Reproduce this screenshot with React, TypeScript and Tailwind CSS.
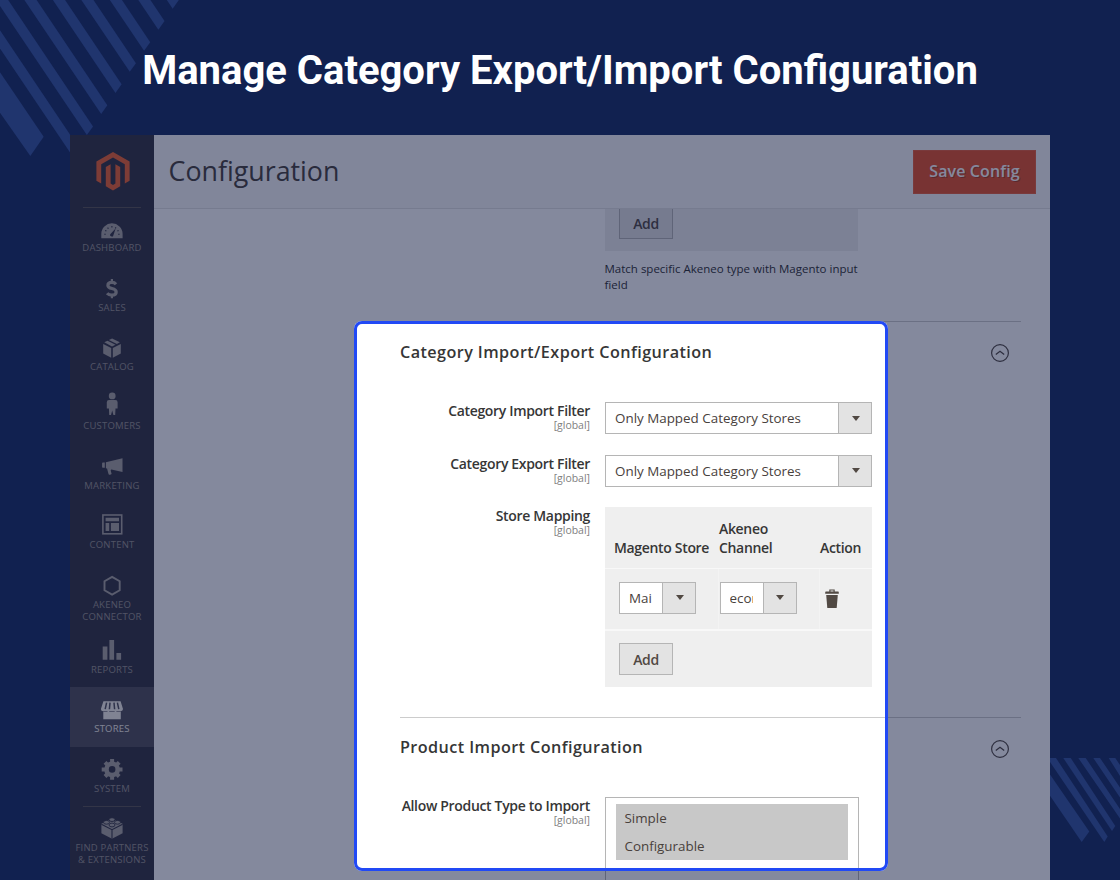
import type { ReactNode } from "react";

type MenuItem = {
  label: string[];
  height: string;
  icon: ReactNode;
  active?: boolean;
};

const menuItems: MenuItem[] = [
  {
    label: ["DASHBOARD"],
    height: "h-[59.4px]",
    icon: (
      <>
        <path d="M1.3 22.2v-4.4a10.65 10.5 0 0 1 21.3 0v4.4z" fill="currentColor" />
        <path d="M4.3 18.3h1.4M5.2 14.4l1.2.6M7.6 11.6l.8 1.1M11.9 10v1.4M18.6 14.4l-1.2.6M19.6 18.3h-1.4M16 11.4l-.7 1" stroke="#343340" strokeWidth="1.1" />
        <path d="M15.6 12.6l-2.2 6.6a1.6 1.6 0 1 1-2.7-1.4z" fill="#343340" />
      </>
    ),
  },
  {
    label: ["SALES"],
    height: "h-[59.4px]",
    icon: (
      <>
        <path d="M16 8.2c-1-1.2-2.4-1.8-4.1-1.8-2.5 0-4 1.2-4 3 0 4.3 8.3 2 8.3 6.5 0 2-1.7 3.2-4.3 3.2-2 0-3.7-.6-4.8-1.9" fill="none" stroke="currentColor" strokeWidth="3.2" />
        <path d="M11.9 3v3M11.9 19.500v2.800" stroke="currentColor" strokeWidth="2.2" />
      </>
    ),
  },
  {
    label: ["CATALOG"],
    height: "h-[59.4px]",
    icon: (
      <g fill="currentColor">
        <path d="M3.2 8.9l8 4.1v9.8l-8-4.3z" />
        <path d="M20.8 8.9l-8 4.1v9.8l8-4.3z" />
        <path d="M4.3 7.3l3.2-1.6 8 4.1-3.5 1.8z" />
        <path d="M8.9 5l3.2-1.6 7.7 3.9-2.9 1.6z" />
      </g>
    ),
  },
  {
    label: ["CUSTOMERS"],
    height: "h-[59.4px]",
    icon: (
      <g fill="currentColor">
        <circle cx="12.2" cy="1.9" r="3.4" />
        <path d="M9 6h6.4a2.2 2.2 0 0 1 2.2 2.2v6.4h-2.1l-.3 6.5h-1.8l-1.2-4.5-1.2 4.5H9.2l-.3-6.5H6.8V8.2A2.2 2.2 0 0 1 9 6z" />
      </g>
    ),
  },
  {
    label: ["MARKETING"],
    height: "h-[59.4px]",
    icon: (
      <g fill="currentColor">
        <path d="M5.9 8.3l16.6-4v13.6L5.9 14.3z" />
        <path d="M2.9 8.6h1.9v5.2H2.9a.8.8 0 0 1-.8-.8V9.4a.8.8 0 0 1 .8-.8z" />
        <path d="M6.9 14l4.4 1-.6 1.5.9 3.6c-1 .8-2.3.8-3 .1z" />
      </g>
    ),
  },
  {
    label: ["CONTENT"],
    height: "h-[59.4px]",
    icon: (
      <>
        <rect x="2.9" y="2" width="18.8" height="18.8" fill="none" stroke="currentColor" strokeWidth="1.6" />
        <path d="M5.6 4.7h13.4v3.5H5.6zM5.6 9.9h3.6v8H5.6zM10.9 9.9H19v8h-8.1z" fill="currentColor" />
      </>
    ),
  },
  {
    label: ["AKENEO", "CONNECTOR"],
    height: "h-[65.4px]",
    icon: (
      <path d="M12.1 3.9l7.6 4.4v8.9l-7.6 4.4-7.6-4.400V8.300z" fill="none" stroke="currentColor" strokeWidth="1.9" />
    ),
  },
  {
    label: ["REPORTS"],
    height: "h-[59.4px]",
    icon: (
      <path d="M2.7 8.4h4.7v13.3H2.7zM9.4 2h4.7v19.7H9.4zM16.4 15h4.7v6.7h-4.7z" fill="currentColor" />
    ),
  },
  {
    label: ["STORES"],
    height: "h-[59.2px]",
    active: true,
    icon: (
      <>
        <path d="M3.4 4.3h17.2l2.4 7.8a2.3 2.3 0 0 1-2.2 2.2v7.9H3.3v-7.9A2.3 2.3 0 0 1 .9 12.1z" fill="currentColor" />
        <path d="M6.6 5.6l-1.4 6.6M10 5.6l-.6 6.6M14 5.6l.6 6.6M17.4 5.6l1.4 6.6" stroke="#514f59" strokeWidth="1.5" />
        <path d="M3.2 14.5h4.3M9.2 14.5h5.5M16.4 14.5h4.4" stroke="#514f59" strokeWidth=".6" />
      </>
    ),
  },
  {
    label: ["SYSTEM"],
    height: "h-[59.4px]",
    icon: (
      <g transform="translate(12.1 12.4)">
        <g stroke="currentColor" strokeWidth="4">
          <path d="M0-10.4V10.4M-10.4 0H10.4" />
          <path d="M-7.1-7.1L7.1 7.1M7.1-7.1L-7.1 7.1" />
        </g>
        <circle r="7.9" fill="currentColor" />
        <circle r="3.3" fill="#343340" />
      </g>
    ),
  },
];

const fieldText = "text-[13.4px] text-[#48413c]";
const labelText = "text-[14px] font-semibold tracking-[-0.33px]";

const MagentoLogo = () => (
  <svg viewBox="0 0 34 39" className="h-[39px] w-[34px] fill-[#f0642f]">
    <path d="M17 0L33.6 9.6v19.2l-4.8 2.7V12.3L17 5.4 5.2 12.3v19.2L.4 28.8V9.6z" />
    <path d="M14.6 12.2v19.3L17 33l2.4-1.5V12.2L24.2 15v19.2L17 38.5l-7.2-4.3V15z" />
  </svg>
);

const NavItem = ({ label, height, icon, active }: MenuItem) => (
  <li className={`${height} shrink-0 pt-[10px] ${active ? "bg-[#514f59] text-[#f7f3eb]" : "text-[#aaa6a0]"}`}>
    <svg viewBox="0 0 24 26" className="mx-auto h-[26px] w-6 overflow-visible">
      {icon}
    </svg>
    <div className={`text-center text-[9.52px] leading-[12.5px] tracking-[0.2px] ${active ? "text-[#f7f3eb]" : "text-[#98948f]"}`}>
      {label.map((line) => (
        <div key={line}>{line}</div>
      ))}
    </div>
  </li>
);

const Sidebar = () => (
  <aside className="flex w-[84px] shrink-0 flex-col bg-[#343340]">
    <div className="mx-auto mt-[16.5px] pl-[1.5px]">
      <MagentoLogo />
    </div>
    <div className="mx-auto mt-4 h-px w-[58px] shrink-0 bg-[#5c5652]" />
    <ul className="-mt-[1.3px] flex flex-col">
      {menuItems.map((item) => (
        <NavItem key={item.label[0]} {...item} />
      ))}
    </ul>
    <div className="mx-auto h-px w-[58px] shrink-0 bg-[#5c5652]" />
    <ul className="-mt-[1px]">
      <NavItem
        label={["FIND PARTNERS", "& EXTENSIONS"]}
        height="h-[74px]"
        icon={
          <>
            <path d="M1.4 7.7L12 2.5l10.6 5.2v9.5L12 22.8 1.4 17.2z" fill="currentColor" />
            <path d="M1.4 8.3L12 13.7l10.6-5.4M12 13.7v9" fill="none" stroke="#343340" strokeWidth="1.1" />
            <g fill="currentColor" stroke="#343340" strokeWidth=".9">
              <ellipse cx="12" cy="3.6" rx="3" ry="1.9" />
              <ellipse cx="6.5" cy="6.3" rx="3" ry="1.9" />
              <ellipse cx="17.5" cy="6.3" rx="3" ry="1.9" />
              <ellipse cx="12" cy="9" rx="3" ry="1.9" />
            </g>
          </>
        }
      />
    </ul>
  </aside>
);

const Caret = () => (
  <svg viewBox="0 0 8 5" className="ml-px h-[5px] w-2 fill-[#514943]">
    <path d="M0 0h8L4 5z" />
  </svg>
);

const SelectBox = ({ value, className }: { value: string; className: string }) => (
  <div className={`flex h-8 border border-[#b5b5b5] bg-white ${className}`}>
    <div className="flex min-w-0 flex-1 items-center overflow-hidden pt-px pl-[9px]">
      <span className={`overflow-hidden whitespace-nowrap ${fieldText}`}>{value}</span>
    </div>
    <div className="flex w-[33px] shrink-0 items-center justify-center border-l border-[#b5b5b5] bg-[#e3e3e3]">
      <Caret />
    </div>
  </div>
);

const AddButton = () => (
  <button className={`flex h-8 w-[54px] items-center justify-center border border-[#b5b5b5] bg-[#e3e3e3] text-[#514943] ${labelText}`}>
    Add
  </button>
);

const FieldLabel = ({ children }: { children: string }) => (
  <div className="w-[190px] shrink-0 text-right">
    <div className={`leading-[18px] whitespace-nowrap text-[#363636] ${labelText}`}>{children}</div>
    <div className="-mt-[2px] text-[10.48px] leading-[14px] text-[#808080]">[global]</div>
  </div>
);

const SectionHeader = ({ title }: { title: string }) => (
  <div className="flex h-[63px] items-center justify-between border-t border-[#ccc] pr-[12.5px]">
    <h2 className="pb-[2px] text-[16.19px] font-semibold tracking-[0.42px] text-[#363636]">{title}</h2>
    <svg viewBox="0 0 18 18" className="h-[18px] w-[18px] fill-none stroke-[#514943]">
      <circle cx="9" cy="9" r="8.4" strokeWidth="1.2" />
      <path d="M4.8 10.6L9 7.3l4.2 3.3" strokeWidth="1.3" />
    </svg>
  </div>
);

const TrashIcon = () => (
  <svg viewBox="0 0 14 19" className="h-[19px] w-[14px] fill-[#514943]">
    <path d="M4.3 2.4V.5h5.4v1.9h3.2c.6 0 .9.5.9 1.1v1.3H.2V3.5c0-.6.3-1.1.9-1.1zM5.5 2.4h3v-.9h-3z" />
    <path d="M1.2 6.1h11.6L11.7 19H2.3z" />
  </svg>
);

const StoreMapping = () => (
  <div className="h-[180px] w-[267px] bg-[#efefef]">
    <div className={`grid h-[62px] grid-cols-[114px_101px_1fr] items-end border-b border-[#f8f8f8] pb-[11px] leading-[18.5px] text-[#363636] ${labelText}`}>
      <div className="pl-[9px] whitespace-nowrap">Magento Store</div>
      <div>
        Akeneo
        <br />
        Channel
      </div>
      <div>Action</div>
    </div>
    <div className="grid h-[62px] grid-cols-[114px_101px_1fr] border-b-2 border-[#f8f8f8]">
      <div className="flex items-center border-r border-[#f3f3f3] pb-[3px] pl-[14px]">
        <SelectBox value="Mai" className="w-[77px]" />
      </div>
      <div className="flex items-center border-r border-[#f3f3f3] pb-[3px] pl-[0.5px]">
        <SelectBox value="ecommerce" className="w-[77px] [&>div:first-child]:pr-[10px]" />
      </div>
      <div className="flex items-center pb-px pl-[5px]">
        <TrashIcon />
      </div>
    </div>
    <div className="pt-[12px] pl-[14px]">
      <AddButton />
    </div>
  </div>
);

const Content = () => (
  <div className="relative flex-1 overflow-hidden pr-[29px] pl-[246px]">
    <div className="ml-[205px] h-[42px] w-[253px] overflow-hidden bg-[#efefef] pl-[14px]">
      <div className="-mt-[2px]">
        <AddButton />
      </div>
    </div>
    <p className="mt-[10px] ml-[204.5px] w-[262px] text-[11.5px] leading-4 text-[#303030]">
      Match specific Akeneo type with Magento input
      <br />
      field
    </p>

    <div className="mt-[28px]">
      <SectionHeader title="Category Import/Export Configuration" />
      <div className="mt-[18px] flex gap-[15px]">
        <FieldLabel>Category Import Filter</FieldLabel>
        <SelectBox value="Only Mapped Category Stores" className="w-[267px]" />
      </div>
      <div className="mt-[20.5px] flex gap-[15px]">
        <FieldLabel>Category Export Filter</FieldLabel>
        <SelectBox value="Only Mapped Category Stores" className="w-[267px]" />
      </div>
      <div className="mt-[20.5px] flex gap-[15px]">
        <FieldLabel>Store Mapping</FieldLabel>
        <StoreMapping />
      </div>
    </div>

    <div className="mt-[29.5px]">
      <SectionHeader title="Product Import Configuration" />
      <div className="mt-[17px] flex gap-[15px]">
        <FieldLabel>Allow Product Type to Import</FieldLabel>
        <div className="h-[120px] w-[254px] border border-[#b5b5b5] px-[10px] pt-[6px]">
          <ul className={`bg-[#c8c8c8] ${fieldText}`}>
            <li className="h-7 pl-[8.5px] leading-7">Simple</li>
            <li className="h-7 pl-[8.5px] leading-7">Configurable</li>
          </ul>
        </div>
      </div>
    </div>
  </div>
);

// diagonal bars, each one a step to the lower left of the one before
const cornerBars = [0, 1, 2, 3, 4, 5, 6, 7];

const Stripes = () => (
  <>
    <svg viewBox="0 0 540 480" className="absolute top-0 left-0 h-[160px] w-[180px] fill-[#20356e]">
      {cornerBars.map((i) => {
        const x = 518 - 42.9 * i;
        const y = 26 + 63.2 * i;
        return <path key={i} d={`M${x} ${y}l18.5-26-400-596h-37.5z`} />;
      })}
      <path d="M91 468l40-58L0 217v121z" />
    </svg>
    <svg viewBox="0 0 70 85" className="absolute top-[757.5px] right-0 h-[85px] w-[70px] fill-[#20356e]">
      <path d="M31.7 84l7.6-10.5L0 16.5v21.3z" />
      <path d="M54.3 84l3.4-5.5L6 0H0v4z" />
      <path d="M62 73l3.3-5L20.7 0h-7.4z" />
      <path d="M35.7 0L70 51v9.5L28.3 0zM50 0l20 29.5v10L43.3 0zM65.3 0L70 7v11L58.7 0z" />
    </svg>
  </>
);

export default function App() {
  return (
    <div className="relative flex h-[880px] w-[1120px] flex-col overflow-hidden bg-[#112150] font-['Open_Sans',sans-serif]">
      <Stripes />
      <h1 className="relative h-[135px] pt-[47px] text-center font-['Roboto',sans-serif] text-[40px] leading-[47px] font-bold text-white">
        Manage Category Export/Import Configuration
      </h1>

      <div className="relative mx-auto flex h-[745px] w-[980px] overflow-hidden bg-white">
        <Sidebar />
        <main className="flex min-w-0 flex-1 flex-col">
          <header className="flex h-[74px] shrink-0 items-center justify-between border-b border-[#e3e3e3] bg-[#f8f8f8] pr-[14px] pl-[14.5px]">
            <span className="text-[26.8px] text-[#48413c]">Configuration</span>
            <button className="h-[44px] w-[123px] border border-[#e9603c] bg-[#e6512a] pb-[2px] text-[16px] font-semibold tracking-[0.12px] text-white [text-shadow:1px_1px_0_rgba(0,0,0,0.25)]">
              Save Config
            </button>
          </header>
          <Content />
        </main>

        {/* spotlight: the huge shadow dims everything outside of the frame */}
        <div className="absolute top-[186px] left-[284px] h-[550px] w-[534px] rounded-lg border-[3px] border-[#2149f5] shadow-[0_0_0_1200px_rgba(12,21,61,0.505)]" />
      </div>
    </div>
  );
}
